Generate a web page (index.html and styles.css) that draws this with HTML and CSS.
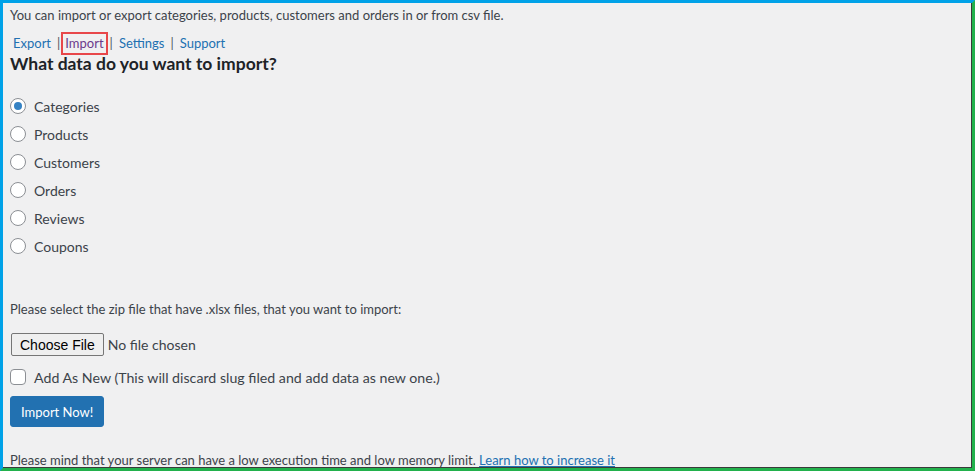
FILE: index.html
```html
<!DOCTYPE html>
<html lang="en">
<head>
    <meta charset="UTF-8">
    <meta name="viewport" content="width=device-width, initial-scale=1.0">
    <title>Import</title>
    <link rel="stylesheet" href="styles.css">
</head>
<body>

    <div class="frame">
        <p class="intro">You can import or export categories, products, customers and orders in or from csv file.</p>

        <div class="tabs">
            <a href="#" class="tab">Export</a>
            <span class="sep">|</span>
            <a href="#" class="tab current">Import</a>
            <span class="sep">|</span>
            <a href="#" class="tab">Settings</a>
            <span class="sep">|</span>
            <a href="#" class="tab">Support</a>
        </div>

        <h2 class="heading">What data do you want to import?</h2>

        <div class="options">
            <label class="option"><input type="radio" name="type" checked> Categories</label>
            <label class="option"><input type="radio" name="type"> Products</label>
            <label class="option"><input type="radio" name="type"> Customers</label>
            <label class="option"><input type="radio" name="type"> Orders</label>
            <label class="option"><input type="radio" name="type"> Reviews</label>
            <label class="option"><input type="radio" name="type"> Coupons</label>
        </div>

        <p class="hint">Please select the zip file that have .xlsx files, that you want to import:</p>

        <div class="file-row">
            <button class="file-button">Choose File</button>
            <span class="file-name">No file chosen</span>
        </div>

        <label class="check"><input type="checkbox"> Add As New (This will discard slug filed and add data as new one.)</label>

        <button class="import-button">Import Now!</button>

        <p class="note">Please mind that your server can have a low execution time and low memory limit. <a href="#" class="note-link">Learn how to increase it</a></p>
    </div>

</body>
</html>
```

FILE: styles.css
```css
* {
    box-sizing: border-box;
}

body {
    margin: 0;
    font-family: Lato, "Noto Sans", sans-serif;
    font-size: 13px;
    color: #3c434a;
    background: #f0f0f1;
}

.frame {
    width: 975px;
    height: 471px;
    border-top: 3px solid #00a2e8;
    border-left: 3px solid #00a2e8;
    border-right: 3px solid #22b14c;
    border-bottom: 3px solid #22b14c;
    background: #f0f0f1;
    padding: 0 0 0 7px;
    box-shadow: inset -1px -1px 0 #3a3a3a;
    overflow: hidden;
}

.intro {
    margin: 2px 0 0;
    line-height: 20px;
}

.tabs {
    margin-top: 7px;
    display: flex;
    align-items: center;
    height: 22px;
    padding-left: 3px;
}

.tab {
    color: #2271b1;
    text-decoration: none;
}

.tab.current {
    color: #6c3a8c;
    border: 2px solid #e8474a;
    padding: 1px 2px;
    line-height: 17px;
    margin: 0 -4px 0 -5px;
}

.sep {
    color: #50575e;
    margin: 0 6px;
}

.heading {
    margin: -1px 0 0;
    font-size: 17.5px;
    font-weight: 700;
    color: #1d2327;
    line-height: 22px;
}

.options {
    margin-top: 17px;
    display: flex;
    flex-direction: column;
}

.option {
    display: flex;
    align-items: center;
    height: 28px;
    gap: 8px;
    font-size: 14px;
}

.option input,
.check input {
    appearance: none;
    margin: 0;
    width: 16px;
    height: 16px;
    border: 1px solid #8c8f94;
    background: #fff;
    display: flex;
    align-items: center;
    justify-content: center;
}

.option input {
    border-radius: 50%;
}

.option input:checked::before {
    content: "";
    width: 8px;
    height: 8px;
    border-radius: 50%;
    background: #3582c4;
}

.check input {
    border-radius: 4px;
}

.hint {
    margin: 39px 0 0;
    line-height: 20px;
}

.file-row {
    margin-top: 14px;
    display: flex;
    align-items: center;
    gap: 4px;
}

.file-button {
    margin-left: 1px;
    height: 23px;
    padding: 0 8px;
    font-family: "Liberation Sans", Arial, sans-serif;
    font-size: 14px;
    color: #000;
    background: #efefef;
    border: 1px solid #767676;
    border-radius: 2px;
}

.file-name {
    font-size: 14px;
}

.check {
    margin-top: 10px;
    display: flex;
    align-items: center;
    gap: 8px;
    height: 22px;
    font-size: 14.2px;
}

.import-button {
    margin-top: 8px;
    height: 31px;
    padding: 0 10px;
    font-family: inherit;
    font-size: 13px;
    color: #fff;
    background: #2271b1;
    border: 1px solid #2271b1;
    border-radius: 3px;
}

.note {
    margin: 23px 0 0;
    line-height: 20px;
}

.note-link {
    color: #2271b1;
}
```
